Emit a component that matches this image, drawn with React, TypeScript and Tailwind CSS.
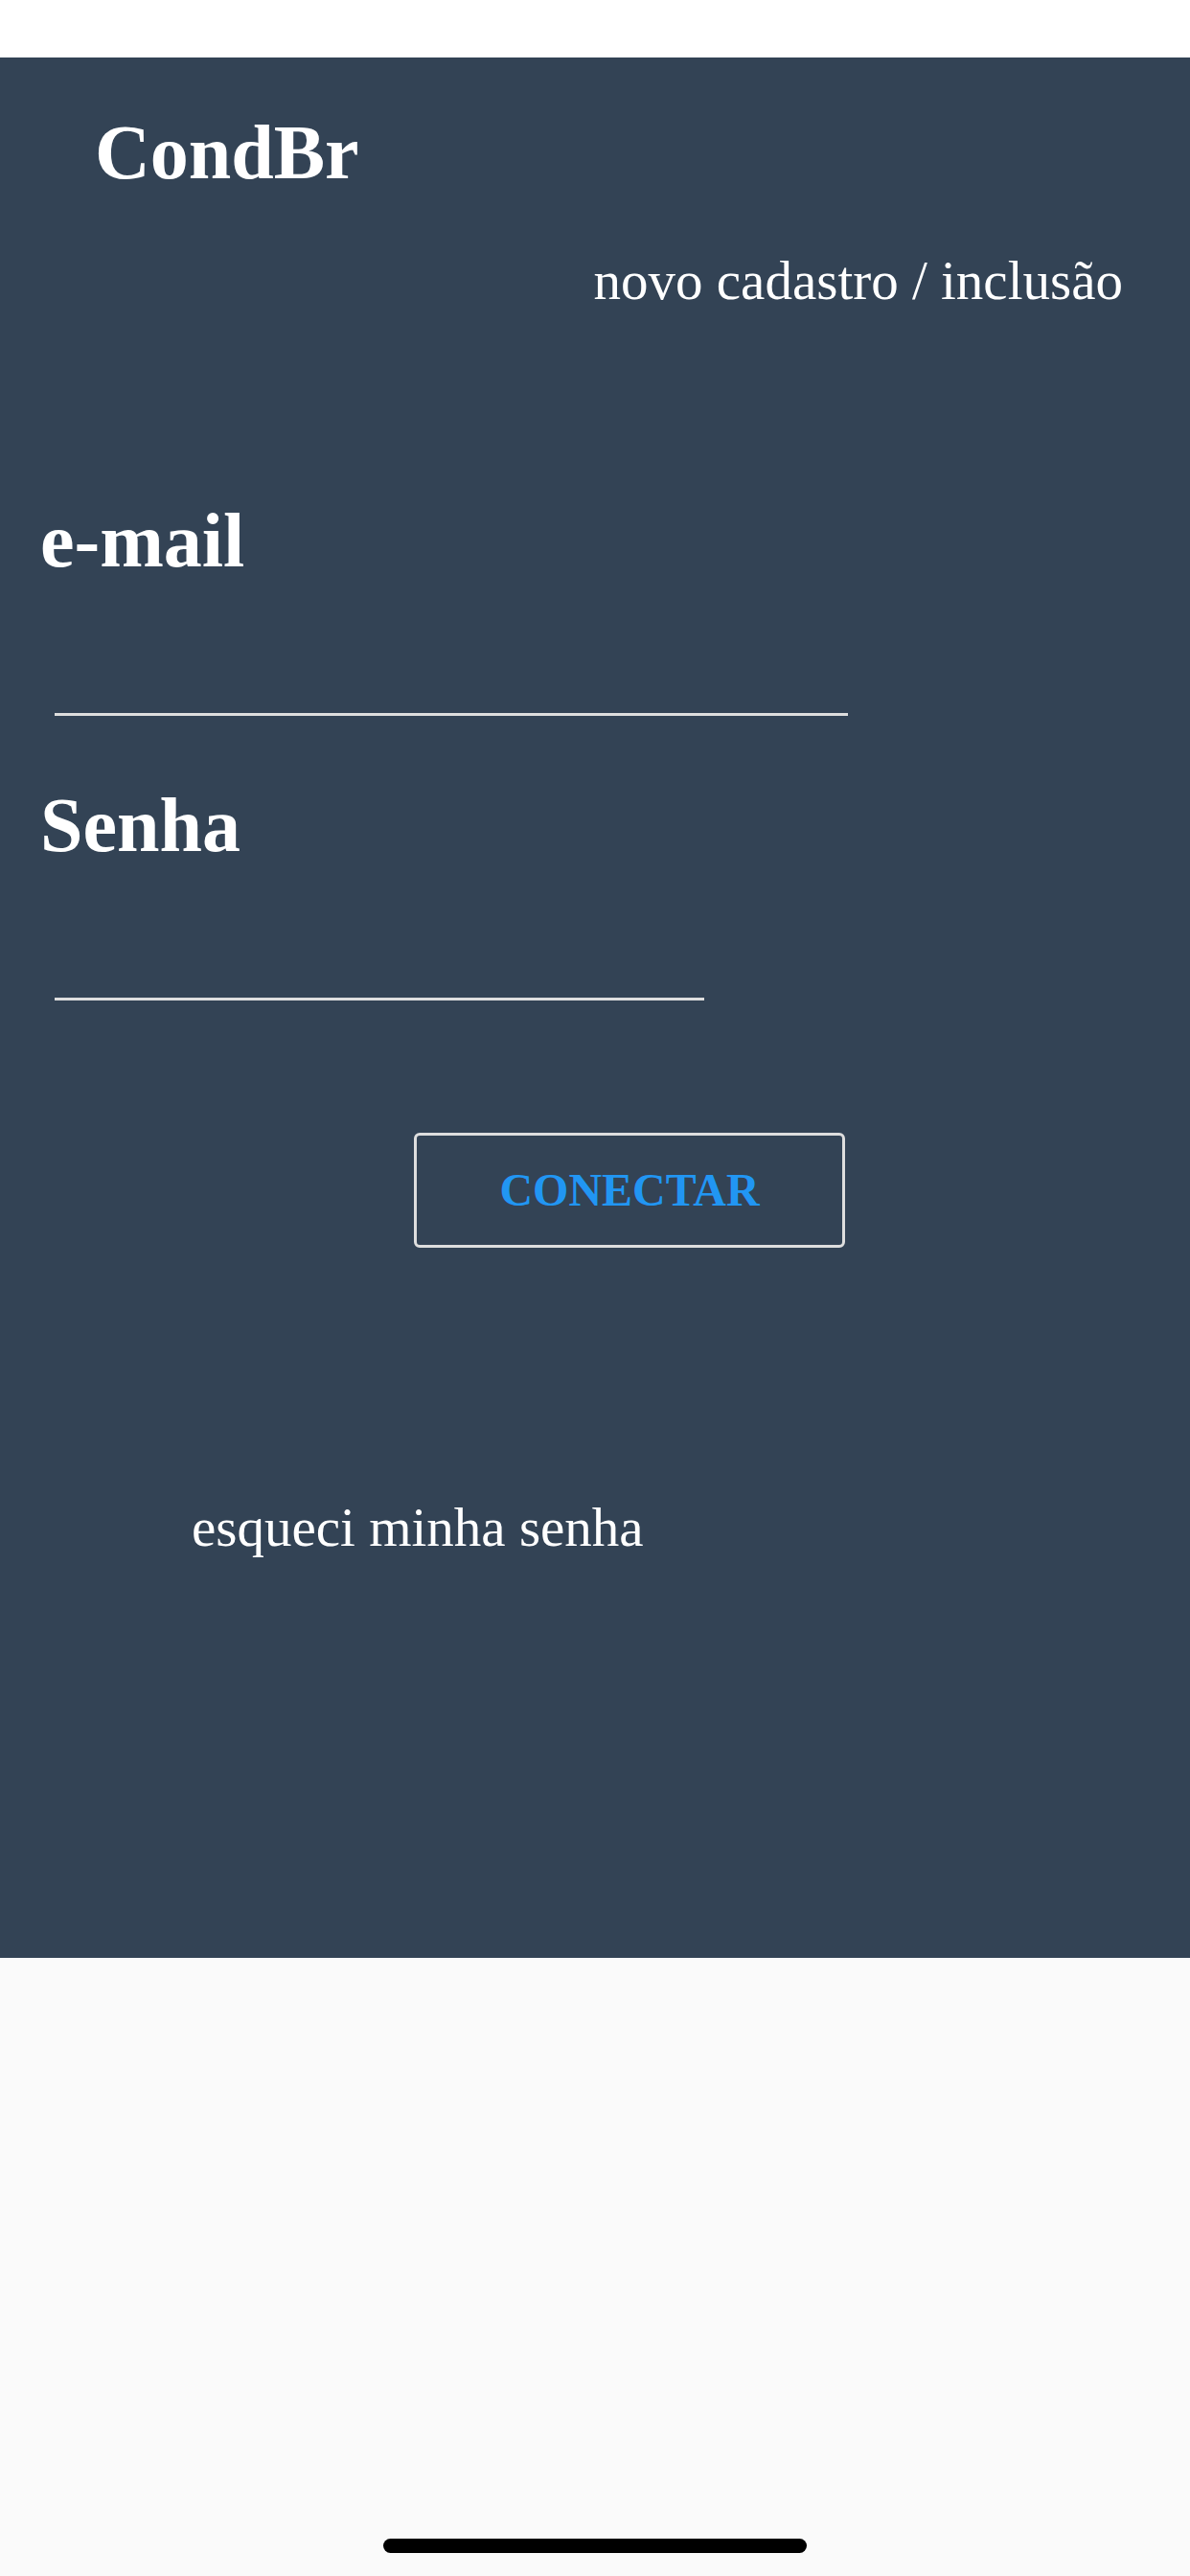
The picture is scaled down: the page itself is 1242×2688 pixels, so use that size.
export default function App() {
  return (
    <div className="flex min-h-[2688px] w-full flex-col bg-white" style={{ fontFamily: '"Liberation Serif", "Times New Roman", serif' }}>
      <div className="h-[60px] bg-white" />

      <main className="flex h-[1983px] flex-col bg-[#334355] pt-[59px] text-white">
        <h1 className="pl-[99px] text-[80px] font-bold leading-none">CondBr</h1>
        <a className="mt-[65px] self-end pr-[70px] text-[57px] leading-none">novo cadastro / inclusão</a>

        <label className="mt-[203px] pl-[42px] text-[80px] font-bold leading-none">e-mail</label>
        <div className="ml-[57px] mt-[140px] h-[3px] w-[828px] bg-[#dedede]" />

        <label className="mt-[74px] pl-[42px] text-[80px] font-bold leading-none">Senha</label>
        <div className="ml-[57px] mt-[140px] h-[3px] w-[678px] bg-[#dedede]" />

        <button className="ml-[432px] mt-[138px] flex h-[120px] w-[450px] items-center justify-center rounded-[6px] border-[3px] border-[#dedede] text-[48px] font-bold leading-none text-[#2196f3]">
          CONECTAR
        </button>

        <a className="mt-[263px] pl-[200px] text-[57px] leading-none">esqueci minha senha</a>
      </main>

      <div className="flex flex-1 flex-col items-center justify-end bg-[#fafafa] pb-[24px]">
        <div className="h-[15px] w-[442px] rounded-full bg-black" />
      </div>
    </div>
  );
}
